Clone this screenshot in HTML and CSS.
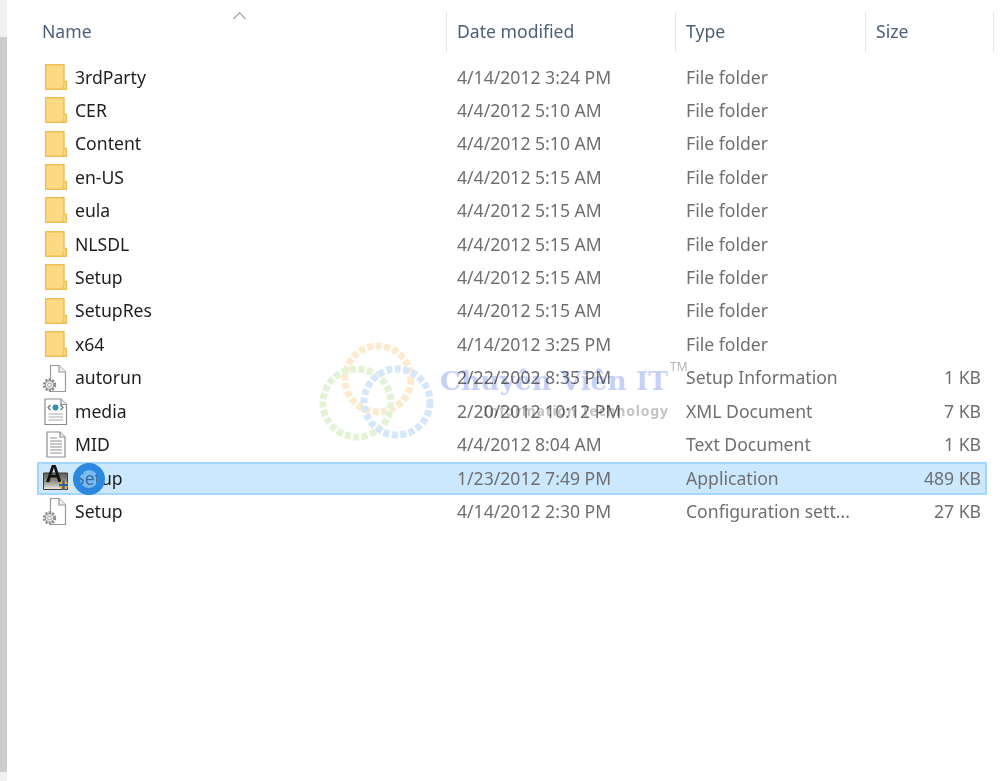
FILE: index.html
```html
<!DOCTYPE html>
<html lang="en">
<head>
    <meta charset="UTF-8">
    <title>Setup folder</title>
    <link rel="stylesheet" href="styles.css">
</head>
<body>

<svg class="icon-defs" width="0" height="0">
    <defs>
        <linearGradient id="app-fill" x1="0" y1="0" x2="0" y2="1">
            <stop offset="0" stop-color="#5f5f58"/>
            <stop offset=".5" stop-color="#8f8f88"/>
            <stop offset="1" stop-color="#ecece6"/>
        </linearGradient>
    </defs>
    <symbol id="i-folder" viewBox="0 0 26 29">
        <path d="M3.700 1.700H22V18.500H24.300V26.300H3.700Z" fill="#fcd983" stroke="#efbd55" stroke-width="1.400"/>
        <path d="M22 18.500V26L19.500 25.500Z" fill="#f3c564"/>
    </symbol>
    <symbol id="i-gear" viewBox="0 0 26 29">
        <path d="M8.500 1.500H17L23.500 8V27.500H8.500Z" fill="#fff" stroke="#9a9a9a" stroke-width="1.200"/>
        <path d="M17 1.500V8H23.500" fill="#eee" stroke="#9a9a9a" stroke-width="1.200"/>
        <circle cx="7.500" cy="21" r="5.200" fill="none" stroke="#8a8a8a" stroke-width="3" stroke-dasharray="2 1.300"/>
        <circle cx="7.500" cy="21" r="4.300" fill="#e6e6e6" stroke="#8f8f8f"/>
        <circle cx="7.500" cy="21" r="1.800" fill="#fff" stroke="#8f8f8f" stroke-width=".8"/>
    </symbol>
    <symbol id="i-xml" viewBox="0 0 26 29">
        <path d="M3 2H19L24.500 7.500V27.500H3Z" fill="#fff" stroke="#8d8d8d" stroke-width="1.200"/>
        <path d="M19 2V7.500H24.500" fill="#eee" stroke="#8d8d8d" stroke-width="1.200"/>
        <path d="M8.500 8L6 10.500L8.500 13M18.500 8L21 10.500L18.500 13" fill="none" stroke="#5c6f80" stroke-width="1.100"/>
        <circle cx="13.500" cy="10.500" r="3" fill="#2f8fb5"/>
        <path d="M6.500 17H21M6.500 20H21M6.500 23H21" stroke="#a9a9a9" stroke-width="1.200"/>
    </symbol>
    <symbol id="i-text" viewBox="0 0 26 29">
        <path d="M5 2H18L23 7V27H5Z" fill="#fff" stroke="#8d8d8d" stroke-width="1.200"/>
        <path d="M18 2V7H23" fill="#eee" stroke="#8d8d8d" stroke-width="1.200"/>
        <path d="M8 8H15M8 11H20M8 14H20M8 17H20M8 20H20M8 23H20" stroke="#8f8f8f" stroke-width="1.200"/>
    </symbol>
    <symbol id="i-app" viewBox="0 0 26 29">
        <path d="M1.500 9H25.500V25.500H1.500Z" fill="url(#app-fill)" stroke="#3d3d3d"/>
        <text x="3.500" y="17.500" class="app-letter">A</text>
        <circle cx="21.500" cy="21" r="4.500" fill="#f2a41f"/>
        <path d="M21.500 16.500V25.500M17 21H26" stroke="#1f5fb4" stroke-width="2.200"/>
    </symbol>
</svg>

<div class="window">
    <div class="scrollbar"><div class="thumb"></div></div>

    <div class="content">
        <div class="header">
            <div class="col-head head-name">Name<span class="sort-arrow"></span></div>
            <div class="col-head head-date">Date modified</div>
            <div class="col-head head-type">Type</div>
            <div class="col-head head-size">Size</div>
        </div>

        <div class="rows">
            <div class="row"><div class="name"><svg class="ico"><use href="#i-folder"/></svg>3rdParty</div><div>4/14/2012 3:24 PM</div><div>File folder</div><div class="size"></div></div>
            <div class="row"><div class="name"><svg class="ico"><use href="#i-folder"/></svg>CER</div><div>4/4/2012 5:10 AM</div><div>File folder</div><div class="size"></div></div>
            <div class="row"><div class="name"><svg class="ico"><use href="#i-folder"/></svg>Content</div><div>4/4/2012 5:10 AM</div><div>File folder</div><div class="size"></div></div>
            <div class="row"><div class="name"><svg class="ico"><use href="#i-folder"/></svg>en-US</div><div>4/4/2012 5:15 AM</div><div>File folder</div><div class="size"></div></div>
            <div class="row"><div class="name"><svg class="ico"><use href="#i-folder"/></svg>eula</div><div>4/4/2012 5:15 AM</div><div>File folder</div><div class="size"></div></div>
            <div class="row"><div class="name"><svg class="ico"><use href="#i-folder"/></svg>NLSDL</div><div>4/4/2012 5:15 AM</div><div>File folder</div><div class="size"></div></div>
            <div class="row"><div class="name"><svg class="ico"><use href="#i-folder"/></svg>Setup</div><div>4/4/2012 5:15 AM</div><div>File folder</div><div class="size"></div></div>
            <div class="row"><div class="name"><svg class="ico"><use href="#i-folder"/></svg>SetupRes</div><div>4/4/2012 5:15 AM</div><div>File folder</div><div class="size"></div></div>
            <div class="row"><div class="name"><svg class="ico"><use href="#i-folder"/></svg>x64</div><div>4/14/2012 3:25 PM</div><div>File folder</div><div class="size"></div></div>
            <div class="row"><div class="name"><svg class="ico"><use href="#i-gear"/></svg>autorun</div><div>2/22/2002 8:35 PM</div><div>Setup Information</div><div class="size">1 KB</div></div>
            <div class="row"><div class="name"><svg class="ico"><use href="#i-xml"/></svg>media</div><div>2/20/2012 10:12 PM</div><div>XML Document</div><div class="size">7 KB</div></div>
            <div class="row"><div class="name"><svg class="ico"><use href="#i-text"/></svg>MID</div><div>4/4/2012 8:04 AM</div><div>Text Document</div><div class="size">1 KB</div></div>
            <div class="row selected"><div class="name"><svg class="ico"><use href="#i-app"/></svg>Setup</div><div>1/23/2012 7:49 PM</div><div>Application</div><div class="size">489 KB</div></div>
            <div class="row"><div class="name"><svg class="ico"><use href="#i-gear"/></svg>Setup</div><div>4/14/2012 2:30 PM</div><div>Configuration sett...</div><div class="size">27 KB</div></div>
        </div>
    </div>

    <!-- watermark over the list -->
    <div class="watermark">
        <svg class="wm-rings" width="120" height="105" viewBox="0 0 120 105">
            <circle cx="60" cy="39" r="33" stroke="#fdeacf"/>
            <circle cx="39" cy="63" r="34" stroke="#e4f3d6"/>
            <circle cx="79" cy="62" r="33" stroke="#d6e7fc"/>
        </svg>
        <div class="wm-title">Chuyên Viên IT</div>
        <div class="wm-tm">TM</div>
        <div class="wm-sub">Information Technology</div>
    </div>

    <!-- click highlight -->
    <div class="cursor-ring"></div>
</div>

</body>
</html>
```

FILE: styles.css
```css
html, body {
    margin: 0;
    height: 781px;
    overflow: hidden;
    background-color: #ffffff;
}

body {
    font-family: 'Noto Sans', sans-serif;
    font-size: 17.6px;
    color: #6f6f6f;
}

.icon-defs {
    display: block;
}

.app-letter {
    font-family: 'Liberation Sans', sans-serif;
    font-weight: bold;
    font-size: 23px;
    fill: #111111;
}

.window {
    position: relative;
    display: flex;
    height: 781px;
    filter: blur(0.45px);
}

.scrollbar {
    width: 7px;
    padding-top: 37px;
    box-sizing: border-box;
    background-color: #f1f1f1;
}

.thumb {
    height: 735px;
    background-color: #cdcdcd;
}

.content {
    margin-left: 30px;
    width: 963px;
}

.header {
    display: flex;
    height: 60.5px;
    padding-top: 12px;
    box-sizing: border-box;
    color: #4c607a;
}

.col-head {
    position: relative;
    height: 40px;
    line-height: 38px;
    padding-left: 10px;
    box-sizing: border-box;
    border-right: 1px solid #e5e5e5;
}

.head-name { width: 410px; padding-left: 5px; }
.head-date { width: 229px; }
.head-type { width: 190px; }
.head-size { width: 128px; }

.sort-arrow {
    position: absolute;
    left: 198px;
    top: 2px;
    width: 9px;
    height: 9px;
    box-sizing: border-box;
    border-left: 1.5px solid #8a8a8a;
    border-top: 1.5px solid #8a8a8a;
    transform: rotate(45deg);
}

.row {
    display: grid;
    grid-template-columns: 420px 229px 170px 125px;
    width: 950px;
    height: 33.43px;
    line-height: 33.43px;
    box-sizing: border-box;
    white-space: nowrap;
}

.row.selected {
    background-color: #cce8ff;
    outline: 2px solid #a5d6ff;
    outline-offset: -2px;
}

.name {
    display: flex;
    align-items: center;
    color: #1e1e1e;
}

.ico {
    width: 26px;
    height: 29px;
    margin-left: 5px;
    margin-right: 7px;
    flex-shrink: 0;
}

.size {
    text-align: right;
}

.watermark {
    position: absolute;
    left: 318px;
    top: 340px;
    width: 380px;
    height: 105px;
}

.wm-rings {
    position: absolute;
    left: 0;
    top: 0;
}

.wm-rings circle {
    fill: none;
    stroke-width: 7;
    stroke-dasharray: 6 2.500;
}

.wm-title {
    position: absolute;
    left: 122px;
    top: 24px;
    font-family: 'DejaVu Serif', serif;
    font-weight: bold;
    font-size: 26.500px;
    line-height: 34px;
    white-space: nowrap;
    color: #c6d1f7;
    mix-blend-mode: multiply;
}

.wm-tm {
    position: absolute;
    left: 352px;
    top: 18px;
    font-size: 12px;
    color: #b4b4b4;
}

.wm-sub {
    position: absolute;
    left: 165px;
    top: 61px;
    font-size: 14px;
    font-weight: bold;
    letter-spacing: 0.8px;
    white-space: nowrap;
    color: #c4c4c4;
    mix-blend-mode: multiply;
}

.cursor-ring {
    position: absolute;
    left: 73px;
    top: 463px;
    width: 32px;
    height: 32px;
    box-sizing: border-box;
    border: 7px solid #2a88de;
    border-radius: 50%;
    background-color: rgba(70, 155, 235, 0.6);
}
```
